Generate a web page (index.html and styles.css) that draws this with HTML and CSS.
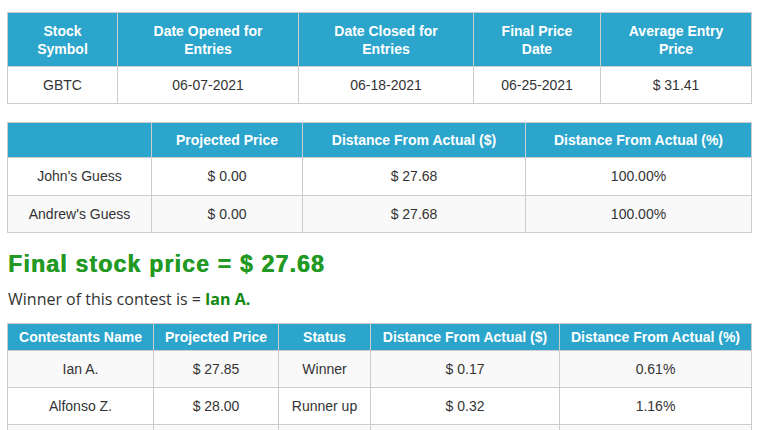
FILE: index.html
```html
<!DOCTYPE html>
<html>
<head>
<meta charset="utf-8">
<link rel="stylesheet" href="styles.css">
</head>
<body>
<div class="page">
  <table class="grid t1">
    <colgroup>
      <col class="c110"><col class="c181"><col class="c175"><col class="c127"><col class="c151">
    </colgroup>
    <thead>
      <tr class="head2">
        <th>Stock<br>Symbol</th>
        <th>Date Opened for<br>Entries</th>
        <th>Date Closed for<br>Entries</th>
        <th>Final Price<br>Date</th>
        <th>Average Entry<br>Price</th>
      </tr>
    </thead>
    <tbody>
      <tr class="white">
        <td>GBTC</td><td>06-07-2021</td><td>06-18-2021</td><td>06-25-2021</td><td>$ 31.41</td>
      </tr>
    </tbody>
  </table>

  <table class="grid t2">
    <colgroup>
      <col class="c144"><col class="c151"><col class="c223"><col class="c226">
    </colgroup>
    <thead>
      <tr class="head1">
        <th></th><th>Projected Price</th><th>Distance From Actual ($)</th><th>Distance From Actual (%)</th>
      </tr>
    </thead>
    <tbody>
      <tr class="white"><td>John's Guess</td><td>$ 0.00</td><td>$ 27.68</td><td>100.00%</td></tr>
      <tr class="grey"><td>Andrew's Guess</td><td>$ 0.00</td><td>$ 27.68</td><td>100.00%</td></tr>
    </tbody>
  </table>

  <h2 class="final">Final stock price = $ 27.68</h2>
  <p class="winner">Winner of this contest is = <strong>Ian A.</strong></p>

  <table class="grid t3">
    <colgroup>
      <col class="c146"><col class="c125"><col class="c92"><col class="c189"><col class="c192">
    </colgroup>
    <thead>
      <tr class="head0">
        <th>Contestants Name</th><th>Projected Price</th><th>Status</th><th>Distance From Actual ($)</th><th>Distance From Actual (%)</th>
      </tr>
    </thead>
    <tbody>
      <tr class="grey"><td>Ian A.</td><td>$ 27.85</td><td>Winner</td><td>$ 0.17</td><td>0.61%</td></tr>
      <tr class="white"><td>Alfonso Z.</td><td>$ 28.00</td><td>Runner up</td><td>$ 0.32</td><td>1.16%</td></tr>
      <tr class="grey"><td>Mike R.</td><td>$ 28.50</td><td>-</td><td>$ 0.82</td><td>2.96%</td></tr>
    </tbody>
  </table>
</div>
</body>
</html>
```

FILE: styles.css
```css
html, body {
  margin: 0;
  padding: 0;
  background: #ffffff;
}
.page {
  padding: 12px 9px 0 7px;
  font-family: "Liberation Sans", Arial, sans-serif;
  color: #333333;
}
.grid {
  width: 745px;
  border-collapse: collapse;
  table-layout: fixed;
  font-size: 14px;
}
.grid th, .grid td {
  border: 1px solid #cccccc;
  text-align: center;
  padding: 0 4px;
}
.grid th {
  background: #2ba5cc;
  color: #ffffff;
  font-weight: bold;
  line-height: 18px;
}
.grid td {
  height: 36px;
  line-height: 20px;
}
.head2 th { height: 53px; }
.head1 th { height: 34px; }
.head0 th { height: 26px; }
.t2 td { height: 36.5px; }
.t3 td { height: 36px; }
.white td { background: #ffffff; }
.grey td { background: #f9f9f9; }
.t1 { margin: 0 0 18px 0; }
.t2 { margin: 0; }

.c110 { width: 110px; }
.c181 { width: 181px; }
.c175 { width: 175px; }
.c127 { width: 127px; }
.c151 { width: 151px; }
.c144 { width: 144px; }
.c223 { width: 223px; }
.c226 { width: 226px; }
.c146 { width: 146px; }
.c125 { width: 125px; }
.c92 { width: 92px; }
.c189 { width: 189px; }
.c192 { width: 192px; }

.final {
  margin: 18px 0 0 1px;
  font-family: "Liberation Sans", Arial, sans-serif;
  font-size: 23px;
  font-weight: bold;
  letter-spacing: 1.2px;
  line-height: 26px;
  color: #229922;
  text-shadow: 0.6px 0 0 #229922;
}
.winner {
  margin: 11px 0 13px 1px;
  font-family: "Open Sans", sans-serif;
  font-size: 16px;
  line-height: 22px;
  color: #333333;
}
.winner strong {
  color: #118811;
  font-weight: bold;
}
```
